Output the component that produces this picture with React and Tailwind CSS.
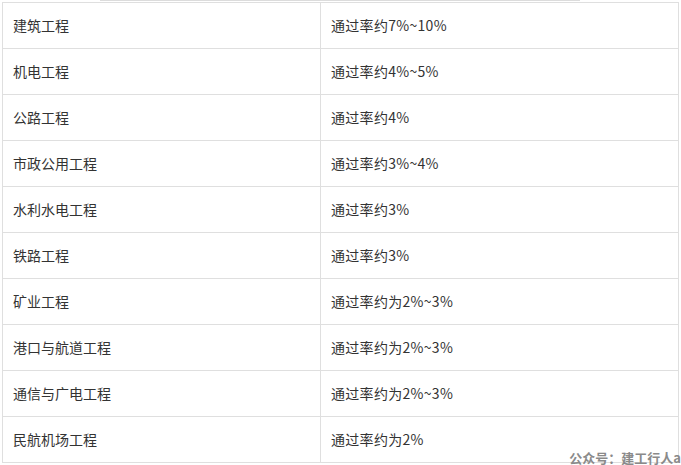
import React from "react";

const rows = [
  ["建筑工程", "通过率约7%~10%"],
  ["机电工程", "通过率约4%~5%"],
  ["公路工程", "通过率约4%"],
  ["市政公用工程", "通过率约3%~4%"],
  ["水利水电工程", "通过率约3%"],
  ["铁路工程", "通过率约3%"],
  ["矿业工程", "通过率约为2%~3%"],
  ["港口与航道工程", "通过率约为2%~3%"],
  ["通信与广电工程", "通过率约为2%~3%"],
  ["民航机场工程", "通过率约为2%"],
];

export default function App() {
  return (
    <div
      className="relative w-[681px] h-[465px] bg-white overflow-hidden text-[#333]"
      style={{ fontFamily: '"Noto Sans CJK SC", "Noto Sans", sans-serif' }}
    >
      <div className="h-px ml-[100px] w-[480px] bg-[#dcdcdc]" />
      <div className="mt-px ml-[2px] w-[677px] border border-[#dfdfdf]">
        {rows.map(([a, b], i) => (
          <div
            key={i}
            className={
              i > 0
                ? "grid grid-cols-[318px_1fr] h-[46px] border-t border-[#dfdfdf]"
                : "grid grid-cols-[318px_1fr] h-[45px]"
            }
          >
            <div className="flex items-center pl-[10px] border-r border-[#dfdfdf] text-[14px]">
              {a}
            </div>
            <div className="flex items-center pl-[10px] text-[14px] tracking-[0.3px]">{b}</div>
          </div>
        ))}
      </div>
      <div className="absolute right-0 top-[450px] text-[13px] font-bold text-[#8a8a8a] leading-[16px] whitespace-nowrap">
        公众号：建工行人a
      </div>
    </div>
  );
}
